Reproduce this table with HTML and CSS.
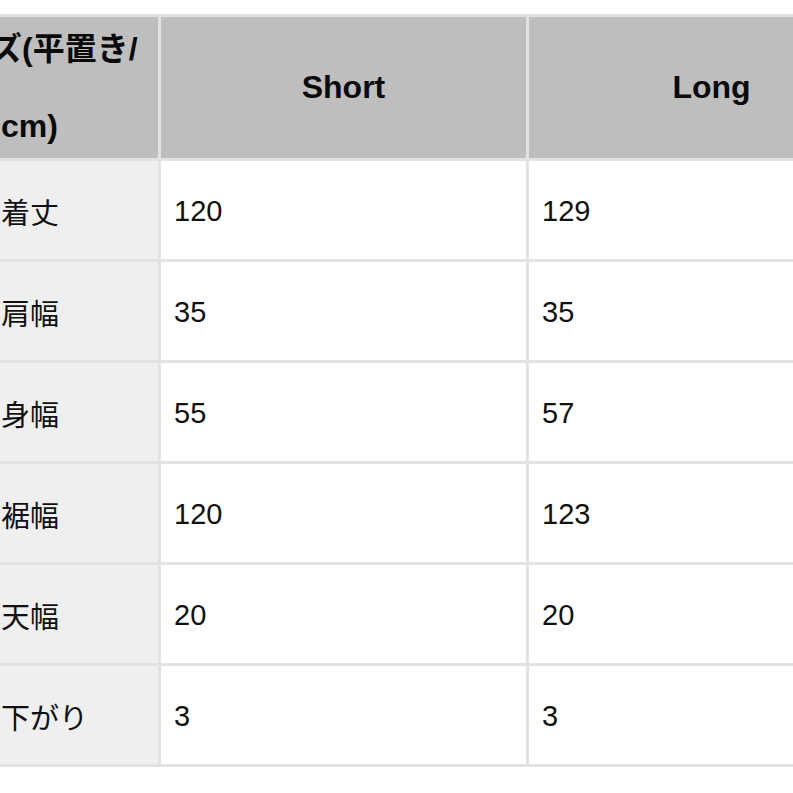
FILE: index.html
```html
<!DOCTYPE html>
<html lang="ja">
<head>
<meta charset="utf-8">
<title>サイズ表</title>
<link rel="stylesheet" href="styles.css">
</head>
<body>
<table class="size-table">
  <colgroup>
    <col class="col-label">
    <col class="col-value">
    <col class="col-value">
  </colgroup>
  <thead>
    <tr>
      <th class="head-label"><div class="head-label-text">サイズ(平置き/<br>cm)</div></th>
      <th class="head-size">Short</th>
      <th class="head-size">Long</th>
    </tr>
  </thead>
  <tbody>
    <tr><th class="row-label">着丈</th><td class="cell">120</td><td class="cell">129</td></tr>
    <tr><th class="row-label">肩幅</th><td class="cell">35</td><td class="cell">35</td></tr>
    <tr><th class="row-label">身幅</th><td class="cell">55</td><td class="cell">57</td></tr>
    <tr><th class="row-label">裾幅</th><td class="cell">120</td><td class="cell">123</td></tr>
    <tr><th class="row-label">天幅</th><td class="cell">20</td><td class="cell">20</td></tr>
    <tr><th class="row-label">下がり</th><td class="cell">3</td><td class="cell">3</td></tr>
  </tbody>
</table>
</body>
</html>
```
FILE: styles.css
```css
html, body {
  margin: 0;
  padding: 0;
  background: #ffffff;
  overflow: hidden;
  width: 793px;
  height: 793px;
}

body {
  font-family: "Liberation Sans", "Noto Sans CJK JP", sans-serif;
  color: #111111;
}

.size-table {
  border-collapse: separate;
  border-spacing: 3px;
  background: #e2e2e2;
  table-layout: fixed;
  width: 909px;
  margin-top: 14px;
  margin-left: -15px;
}

.col-label { width: 170px; }
.col-value { width: 365px; }

thead th {
  height: 141px;
  padding: 0 13px;
  background: #bebebe;
  font-size: 32px;
  font-weight: bold;
  color: #0a0a0a;
  vertical-align: middle;
  box-sizing: border-box;
}

.head-size {
  text-align: center;
}

.head-label {
  text-align: left;
  white-space: nowrap;
}

.head-label-text {
  line-height: 77px;
  margin: -7px 0;
  text-indent: -74px;
}

tbody th, tbody td {
  height: 98px;
  padding: 2px 13px 0;
  font-size: 29px;
  font-weight: normal;
  text-align: left;
  vertical-align: middle;
  box-sizing: border-box;
}

.row-label {
  background: #efefef;
}

.cell {
  background: #ffffff;
}
```
